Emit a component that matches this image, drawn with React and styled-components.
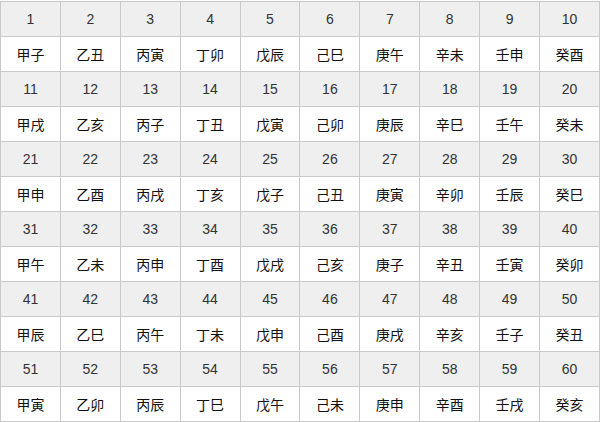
import styled, { createGlobalStyle } from "styled-components";

const stems = ["甲", "乙", "丙", "丁", "戊", "己", "庚", "辛", "壬", "癸"];
const branches = ["子", "丑", "寅", "卯", "辰", "巳", "午", "未", "申", "酉", "戌", "亥"];

const GlobalStyle = createGlobalStyle`
  html, body {
    margin: 0;
    padding: 0;
    background: #fff;
  }
  body {
    padding-top: 1px;
  }
`;

const Table = styled.table`
  border-collapse: collapse;
  width: 600px;
  table-layout: fixed;
  font-family: "Liberation Sans", "Noto Sans CJK SC", sans-serif;
  font-size: 14px;
`;

const Row = styled.tr`
  height: 35px;
  background: ${(p) => (p.$shaded ? "#efefef" : "#fff")};
`;

const Cell = styled.td`
  border: 1px solid #c9c9c9;
  padding: 0;
  text-align: center;
  vertical-align: middle;
  color: ${(p) => (p.$num ? "#333" : "#111")};
  font-family: ${(p) =>
    p.$num ? `"Liberation Sans", sans-serif` : `"Noto Sans CJK SC", sans-serif`};
  font-size: ${(p) => (p.$num ? "14px" : "14px")};
`;

const App = () => {
  const groups = [];
  for (let g = 0; g < 6; g++) {
    const items = [];
    for (let i = 0; i < 10; i++) {
      const n = g * 10 + i;
      items.push({ num: n + 1, name: stems[n % 10] + branches[n % 12] });
    }
    groups.push(items);
  }

  return (
    <>
      <GlobalStyle />
      <Table>
        <tbody>
          {groups.map((items, g) => [
            <Row key={`n${g}`} $shaded>
              {items.map((it) => (
                <Cell key={it.num} $num>
                  {it.num}
                </Cell>
              ))}
            </Row>,
            <Row key={`t${g}`}>
              {items.map((it) => (
                <Cell key={it.num}>{it.name}</Cell>
              ))}
            </Row>,
          ])}
        </tbody>
      </Table>
    </>
  );
};

export default App;
